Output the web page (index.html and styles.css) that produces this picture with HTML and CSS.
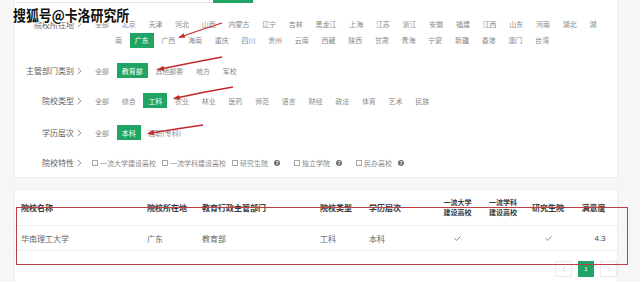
FILE: index.html
```html
<!DOCTYPE html>
<html lang="zh-CN">
<head>
<meta charset="utf-8">
<title>院校库</title>
<link rel="stylesheet" href="styles.css">
</head>
<body>
<div class="page">
  <section class="card filter-card">
    <div class="search">
      <div class="search-input"></div>
      <div class="search-btn"></div>
    </div>
    <div class="filters">
      <div class="frow frow-region">
        <div class="flabel">院校所在地<svg class="chev" width="5" height="8" viewBox="0 0 5 8"><path d="M0.8 0.8 L3.8 4 L0.8 7.2" fill="none" stroke="#888" stroke-width="0.9"/></svg></div>
        <div class="fitems">
          <div class="line">
            <span class="opt">全部</span><span class="opt">北京</span><span class="opt">天津</span><span class="opt">河北</span><span class="opt">山西</span><span class="opt">内蒙古</span><span class="opt">辽宁</span><span class="opt">吉林</span><span class="opt">黑龙江</span><span class="opt">上海</span><span class="opt">江苏</span><span class="opt">浙江</span><span class="opt">安徽</span><span class="opt">福建</span><span class="opt">江西</span><span class="opt">山东</span><span class="opt">河南</span><span class="opt">湖北</span><span class="opt">湖</span>
          </div>
          <div class="line line2">
            <span class="opt">南</span><span class="opt active">广东</span><span class="opt">广西</span><span class="opt">海南</span><span class="opt">重庆</span><span class="opt">四川</span><span class="opt">贵州</span><span class="opt">云南</span><span class="opt">西藏</span><span class="opt">陕西</span><span class="opt">甘肃</span><span class="opt">青海</span><span class="opt">宁夏</span><span class="opt">新疆</span><span class="opt">香港</span><span class="opt">澳门</span><span class="opt">台湾</span>
          </div>
        </div>
      </div>
      <div class="frow">
        <div class="flabel">主管部门类别<svg class="chev" width="5" height="8" viewBox="0 0 5 8"><path d="M0.8 0.8 L3.8 4 L0.8 7.2" fill="none" stroke="#888" stroke-width="0.9"/></svg></div>
        <div class="fitems line">
          <span class="opt">全部</span><span class="opt active">教育部</span><span class="opt">其他部委</span><span class="opt">地方</span><span class="opt">军校</span>
        </div>
      </div>
      <div class="frow">
        <div class="flabel">院校类型<svg class="chev" width="5" height="8" viewBox="0 0 5 8"><path d="M0.8 0.8 L3.8 4 L0.8 7.2" fill="none" stroke="#888" stroke-width="0.9"/></svg></div>
        <div class="fitems line">
          <span class="opt">全部</span><span class="opt">综合</span><span class="opt active">工科</span><span class="opt">农业</span><span class="opt">林业</span><span class="opt">医药</span><span class="opt">师范</span><span class="opt">语言</span><span class="opt">财经</span><span class="opt">政法</span><span class="opt">体育</span><span class="opt">艺术</span><span class="opt">民族</span>
        </div>
      </div>
      <div class="frow frow-level">
        <div class="flabel">学历层次<svg class="chev" width="5" height="8" viewBox="0 0 5 8"><path d="M0.8 0.8 L3.8 4 L0.8 7.2" fill="none" stroke="#888" stroke-width="0.9"/></svg></div>
        <div class="fitems line">
          <span class="opt">全部</span><span class="opt active">本科</span><span class="opt">高职(专科)</span>
        </div>
      </div>
      <div class="frow">
        <div class="flabel">院校特性<svg class="chev" width="5" height="8" viewBox="0 0 5 8"><path d="M0.8 0.8 L3.8 4 L0.8 7.2" fill="none" stroke="#888" stroke-width="0.9"/></svg></div>
        <div class="fitems checks">
          <label class="chk"><span class="box"></span>一流大学建设高校</label>
          <label class="chk"><span class="box"></span>一流学科建设高校</label>
          <label class="chk has-tip"><span class="box"></span>研究生院<span class="tip">?</span></label>
          <label class="chk has-tip"><span class="box"></span>独立学院<span class="tip">?</span></label>
          <label class="chk has-tip"><span class="box"></span>民办高校<span class="tip">?</span></label>
        </div>
      </div>
    </div>
  </section>

  <section class="card table-card">
    <div class="trow thead">
      <div class="cell">院校名称</div>
      <div class="cell">院校所在地</div>
      <div class="cell">教育行政主管部门</div>
      <div class="cell">院校类型</div>
      <div class="cell">学历层次</div>
      <div class="cell c two">一流大学<br>建设高校</div>
      <div class="cell c two">一流学科<br>建设高校</div>
      <div class="cell c">研究生院</div>
      <div class="cell c">满意度</div>
    </div>
    <div class="trow tbody">
      <div class="cell">华南理工大学</div>
      <div class="cell">广东</div>
      <div class="cell">教育部</div>
      <div class="cell">工科</div>
      <div class="cell">本科</div>
      <div class="cell c"><svg width="7" height="5" viewBox="0 0 7 5"><path d="M0.4 2.2 L2.6 4.3 L6.6 0.4" fill="none" stroke="#666" stroke-width="0.8"/></svg></div>
      <div class="cell c"></div>
      <div class="cell c"><svg width="7" height="5" viewBox="0 0 7 5"><path d="M0.4 2.2 L2.6 4.3 L6.6 0.4" fill="none" stroke="#666" stroke-width="0.8"/></svg></div>
      <div class="cell c score">4.3</div>
    </div>
    <div class="pager">
      <span class="pg pg-nav"><svg width="4" height="6" viewBox="0 0 4 6"><path d="M3.2 0.5 L0.8 3 L3.2 5.5" fill="none" stroke="#ccc" stroke-width="0.8"/></svg></span>
      <span class="pg pg-cur">1</span>
      <span class="pg pg-nav"><svg width="4" height="6" viewBox="0 0 4 6"><path d="M0.8 0.5 L3.2 3 L0.8 5.5" fill="none" stroke="#ccc" stroke-width="0.8"/></svg></span>
    </div>
  </section>
</div>

<div class="mark-rect"></div>
<svg class="arrows" width="640" height="282" viewBox="0 0 640 282">
  <defs>
    <marker id="ah" markerWidth="7" markerHeight="5" refX="6" refY="2.5" orient="auto" markerUnits="userSpaceOnUse">
      <path d="M0 0 L7 2.5 L0 5 Z" fill="#c3282f"/>
    </marker>
  </defs>
  <path d="M222 23 Q200 30 179 37.5" fill="none" stroke="#c3282f" stroke-width="1.3" marker-end="url(#ah)"/>
  <path d="M222 57 Q190 63 158 69.5" fill="none" stroke="#c3282f" stroke-width="1.3" marker-end="url(#ah)"/>
  <path d="M233 87 Q203 92 174 98.5" fill="none" stroke="#c3282f" stroke-width="1.3" marker-end="url(#ah)"/>
  <path d="M203 125 Q175 129 148 133.5" fill="none" stroke="#c3282f" stroke-width="1.3" marker-end="url(#ah)"/>
</svg>
<div class="watermark">搜狐号@卡洛研究所</div>
</body>
</html>
```

FILE: styles.css
```css
* {
  box-sizing: border-box;
  margin: 0;
  padding: 0;
}

html, body {
  width: 640px;
  height: 282px;
  overflow: hidden;
}

body {
  position: relative;
  background: #f6f6f6;
  font-family: "Noto Sans CJK SC", "Noto Sans", sans-serif;
  color: #666;
}

.page {
  padding-left: 15px;
  width: 617px;
}

.card {
  background: #fff;
  box-shadow: 0 0 0 1px #ededed;
}

/* ---------- filter card ---------- */
.filter-card {
  height: 177px;
}

.search {
  display: flex;
  height: 3px;
  padding-left: 1px;
}

.search-input {
  width: 196px;
  height: 3px;
  border-bottom: 1px solid #e3e3e3;
}

.search-btn {
  width: 40px;
  height: 3px;
  margin-left: 1px;
  background: #1fa463;
}

.filters {
  display: flex;
  flex-direction: column;
  gap: 15px;
  padding-top: 13px;
}

.frow {
  display: flex;
  align-items: center;
  height: 15px;
}

.frow-region {
  height: 32px;
  align-items: flex-start;
}

.frow-level {
  margin-top: 2px;
}

.flabel {
  width: 69px;
  flex: none;
  display: flex;
  align-items: center;
  justify-content: flex-end;
  font-size: 8px;
  line-height: 15px;
  color: #5f5f5f;
  white-space: nowrap;
}

.frow-region .flabel {
  height: 16px;
}

.chev {
  margin-left: 3px;
  margin-right: 2px;
}

.fitems {
  margin-left: 6px;
}

.line {
  display: flex;
  align-items: center;
  gap: 2.7px;
  height: 15px;
  white-space: nowrap;
}

.frow-region .line {
  height: 16px;
}

.line2 {
  padding-left: 20px;
}

.opt {
  display: inline-flex;
  align-items: center;
  height: 15px;
  padding: 0 5px;
  font-size: 7px;
  color: #8a8a8a;
}

.opt.active {
  background: #1fa463;
  color: #fff;
}

.checks {
  display: flex;
  align-items: center;
  height: 15px;
  padding-left: 2px;
}

.chk {
  display: inline-flex;
  align-items: center;
  font-size: 7px;
  color: #8a8a8a;
  margin-right: 6px;
  white-space: nowrap;
}

.chk.has-tip {
  margin-right: 14px;
}

.box {
  width: 6px;
  height: 6px;
  border: 1px solid #a8a8a8;
  margin-right: 2px;
  background: #fff;
}

.tip {
  display: inline-flex;
  align-items: center;
  justify-content: center;
  width: 6px;
  height: 6px;
  margin-left: 6px;
  border-radius: 50%;
  background: #6e6e6e;
  color: #fff;
  font-size: 5px;
  font-weight: bold;
  line-height: 6px;
}

/* ---------- table card ---------- */
.table-card {
  margin-top: 13px;
  height: 100px;
}

.trow {
  display: grid;
  grid-template-columns: 126px 55px 118px 49px 66px 45px 46px 44px 47px;
  padding-left: 6px;
  border-bottom: 1px solid #efefef;
  align-items: center;
}

.thead {
  height: 36px;
  font-size: 8px;
  font-weight: bold;
  color: #3a3a3a;
}

.thead .two {
  font-size: 7px;
  line-height: 9.5px;
}

.tbody {
  height: 25px;
  font-size: 8px;
  color: #666;
}

.cell {
  white-space: nowrap;
  line-height: 11px;
}

.cell.c {
  text-align: center;
  display: flex;
  justify-content: center;
}

.thead .cell.c.two {
  display: block;
}

.score {
  font-family: "Liberation Sans", Arial, sans-serif;
  color: #444;
  justify-content: flex-start;
  padding-left: 13px;
}

.pager {
  display: flex;
  justify-content: flex-end;
  gap: 6px;
  margin-top: 10px;
}

.pg {
  display: inline-flex;
  align-items: center;
  justify-content: center;
  height: 16px;
}

.pg-nav {
  width: 17px;
  border: 1px solid #ececec;
  background: #fff;
}

.pg-cur {
  width: 16px;
  background: #1fa463;
  color: #fff;
  font-family: "Liberation Sans", Arial, sans-serif;
  font-size: 6px;
}

/* ---------- annotations laid over the screenshot ---------- */
.mark-rect {
  position: absolute;
  left: 16px;
  top: 207px;
  width: 612px;
  height: 58px;
  border: 1.3px solid #bf3d44;
}

.arrows {
  position: absolute;
  left: 0;
  top: 0;
  pointer-events: none;
}

.watermark {
  position: absolute;
  left: 13px;
  top: 6px;
  font-family: "Noto Sans CJK SC", sans-serif;
  font-size: 15px;
  line-height: 18px;
  font-weight: bold;
  color: #111;
  letter-spacing: 0;
  transform: scaleX(0.86);
  transform-origin: left center;
  text-shadow:
    1px 0 0 #fff, -1px 0 0 #fff, 0 1px 0 #fff, 0 -1px 0 #fff,
    1px 1px 0 #fff, -1px -1px 0 #fff, 1px -1px 0 #fff, -1px 1px 0 #fff;
}
```
